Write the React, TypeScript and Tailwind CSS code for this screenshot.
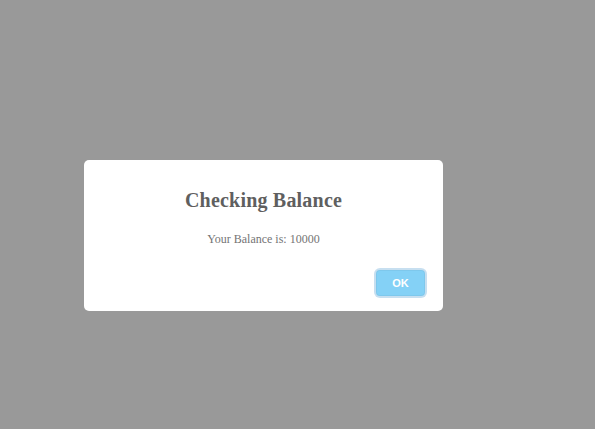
import React from "react";

export default function App() {
  return (
    <div className="w-[595px] h-[429px] bg-[#999999] relative overflow-hidden">
      <div className="absolute left-[84px] top-[160px] w-[359px] h-[151px] bg-white rounded-[5px] flex flex-col items-center">
        <h2 className="mt-[28px] text-[20px] leading-[24px] font-bold text-[#5f5f5f] tracking-[0.2px] [font-family:'Liberation_Serif',serif]">
          Checking Balance
        </h2>
        <p className="mt-[20px] text-[12px] leading-[14px] text-[#747474] [font-family:'Liberation_Serif',serif]">
          Your Balance is: 10000
        </p>
        <div className="w-full flex justify-end pr-[18px] mt-[24px]">
          <button className="w-[49px] h-[26px] rounded-[4px] bg-[#84d1f6] text-white text-[11px] font-bold [font-family:'Liberation_Sans',sans-serif] shadow-[0_0_0_2px_rgba(180,212,235,0.75),inset_0_0_0_1px_rgba(0,0,0,0.04)]">
            OK
          </button>
        </div>
      </div>
    </div>
  );
}
